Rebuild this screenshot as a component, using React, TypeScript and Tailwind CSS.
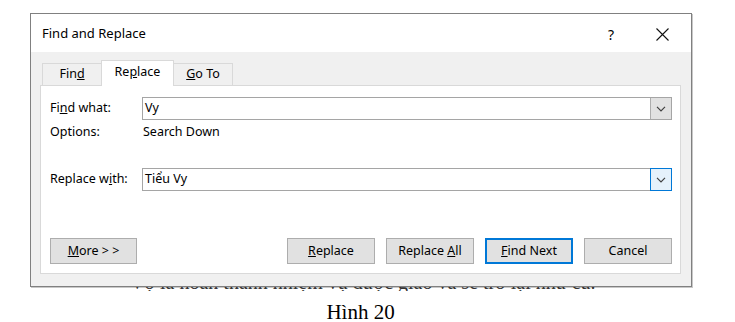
import React from 'react';

const ui = "font-['Noto_Sans',sans-serif]";

function Chevron() {
    return (
        <svg width="10" height="6" viewBox="0 0 10 6" fill="none">
            <path d="M1 0.8 L5 4.8 L9 0.8" stroke="#404040" strokeWidth="1.2" />
        </svg>
    );
}

function Combo({ value, focused }: { value: string; focused?: boolean }) {
    return (
        <div className="flex h-[23px] flex-1 border border-[#a5a5a5] bg-white">
            <div className="flex flex-1 items-center pl-[2px] text-black">{value}</div>
            <div
                className={`flex w-[21px] items-center justify-center border-l ${focused ? 'border border-[#0078d7] bg-[#e5f1fb] -m-[1px] w-[22px]' : 'border-[#adadad] bg-[#e1e1e1]'
                    }`}
            >
                <Chevron />
            </div>
        </div>
    );
}

function Btn({ children, primary, w = 'w-[88px]' }: { children: React.ReactNode; primary?: boolean; w?: string }) {
    return (
        <div
            className={`flex h-[26px] ${w} items-center justify-center bg-[#e1e1e1] text-black ${primary ? 'border-2 border-[#0078d7]' : 'border border-[#adadad]'
                }`}
        >
            {children}
        </div>
    );
}

export default function App() {
    return (
        <div className={`h-[322px] w-[735px] overflow-hidden bg-white ${ui}`}>
            <div className="ml-[30px] mt-[13px] flex h-[274px] w-[662px] flex-col border border-[#808080] bg-[#f0f0f0] shadow-[1px_1px_0_#c8c8c8]">
                {/* title bar */}
                <div className="flex h-[38px] items-center bg-white pl-[11px] pt-[2px]">
                    <span className="text-[13px] text-black">Find and Replace</span>
                    <span className="ml-auto text-[14px] text-black">?</span>
                    <svg className="ml-[42px] mr-[22px]" width="13" height="13" viewBox="0 0 13 13">
                        <path d="M0.5 0.5 L12.5 12.5 M12.5 0.5 L0.5 12.5" stroke="#111" strokeWidth="1.1" />
                    </svg>
                </div>

                {/* tabs */}
                <div className="ml-[11px] mt-[8px] flex h-[25px] items-end text-[12.5px] text-black">
                    <div className="flex h-[22px] w-[59px] items-center justify-center border-l border-t border-[#d9d9d9]">
                        Fin<u>d</u>
                    </div>
                    <div className="relative z-10 -mb-[1px] flex h-[26px] w-[73px] items-center justify-center border-x border-t border-[#d9d9d9] bg-white pb-[2px]">
                        Re<u>p</u>lace
                    </div>
                    <div className="flex h-[22px] w-[59px] items-center justify-center border-r border-t border-[#d9d9d9]">
                        <u>G</u>o To
                    </div>
                </div>

                {/* panel */}
                <div className="ml-[9px] flex h-[189px] w-[641px] flex-col border border-[#d9d9d9] bg-white pl-[9px] pr-[8px] text-[12.5px] text-black">
                    <div className="mt-[11px] flex items-center">
                        <div className="w-[92px]">Fi<u>n</u>d what:</div>
                        <Combo value="Vy" />
                    </div>
                    <div className="mt-[4px] flex h-[16px] items-center">
                        <div className="w-[93px]">Options:</div>
                        <div>Search Down</div>
                    </div>
                    <div className="mt-[28px] flex items-center">
                        <div className="w-[92px]">Replace w<u>i</u>th:</div>
                        <Combo value="Tiểu Vy" focused />
                    </div>
                    <div className="mt-[47px] flex items-center justify-between">
                        <Btn w="w-[87px]">
                            <span>
                                <u>M</u>ore &gt; &gt;
                            </span>
                        </Btn>
                        <div className="flex gap-[11px]">
                            <Btn>
                                <span>
                                    <u>R</u>eplace
                                </span>
                            </Btn>
                            <Btn>
                                <span>
                                    Replace <u>A</u>ll
                                </span>
                            </Btn>
                            <Btn primary>
                                <span>
                                    <u>F</u>ind Next
                                </span>
                            </Btn>
                            <Btn>Cancel</Btn>
                        </div>
                    </div>
                </div>
            </div>

            {/* document line peeking out below the dialog */}
            <div className="ml-[130px] h-[4px] w-[480px] overflow-hidden">
                <div className="-mt-[15px] whitespace-nowrap font-['Liberation_Serif',serif] text-[20px] leading-[20px] text-[#333]">
                    Vợ là hoàn thành nhiệm vụ được giao và sẽ trở lại như cũ.
                </div>
            </div>

            <div className="mt-[11px] pr-[14px] text-center font-['Liberation_Serif',serif] text-[21px] leading-[20px] text-black">
                Hình 20
            </div>
        </div>
    );
}
